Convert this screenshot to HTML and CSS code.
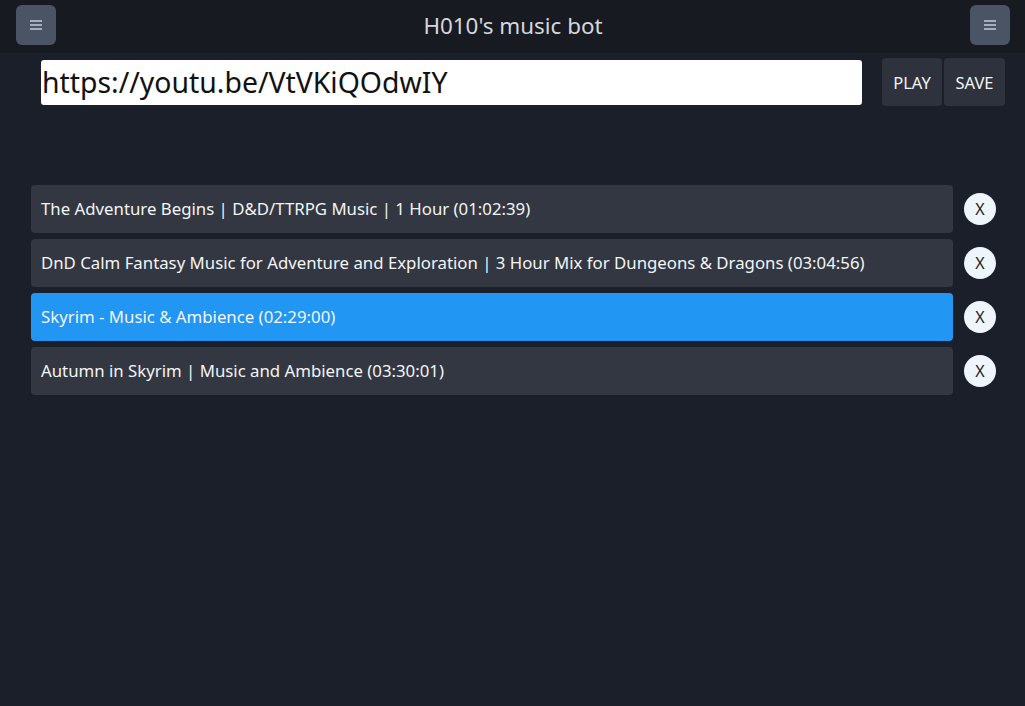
FILE: index.html
```html
<!DOCTYPE html>
<html>
<head>
<meta charset="utf-8">
<link rel="stylesheet" href="styles.css">
</head>
<body>
<header class="topbar">
  <button class="menu-btn" aria-label="menu">
    <svg width="14" height="12" viewBox="0 0 14 12"><path d="M1 2h12M1 6h12M1 10h12" stroke="#c7ccd4" stroke-width="1.4"/></svg>
  </button>
  <h1 class="title">H010's music bot</h1>
  <button class="menu-btn" aria-label="menu">
    <svg width="14" height="12" viewBox="0 0 14 12"><path d="M1 2h12M1 6h12M1 10h12" stroke="#c7ccd4" stroke-width="1.4"/></svg>
  </button>
</header>
<main class="content">
  <div class="url-row">
    <input class="url-input" type="text" value="https://youtu.be/VtVKiQOdwIY">
    <div class="actions">
      <button class="act-btn">PLAY</button>
      <button class="act-btn">SAVE</button>
    </div>
  </div>
  <ul class="queue">
    <li class="row"><div class="track">The Adventure Begins | D&amp;D/TTRPG Music | 1 Hour (01:02:39)</div><button class="remove">X</button></li>
    <li class="row"><div class="track">DnD Calm Fantasy Music for Adventure and Exploration | 3 Hour Mix for Dungeons &amp; Dragons (03:04:56)</div><button class="remove">X</button></li>
    <li class="row"><div class="track active">Skyrim - Music &amp; Ambience (02:29:00)</div><button class="remove">X</button></li>
    <li class="row"><div class="track">Autumn in Skyrim | Music and Ambience (03:30:01)</div><button class="remove">X</button></li>
  </ul>
</main>
</body>
</html>
```
FILE: styles.css
```css
* { box-sizing: border-box; }
html, body { margin: 0; height: 100%; }
body {
  background: #1b1f2a;
  font-family: "Noto Sans", "Open Sans", sans-serif;
  color: #f3f4f6;
}
.topbar {
  height: 53px;
  background: #181a22;
  display: flex;
  align-items: center;
  justify-content: space-between;
  padding: 0 15px 3px 16px;
}
.menu-btn {
  width: 40px;
  height: 40px;
  border: none;
  border-radius: 6px;
  background: #4b5465;
  display: flex;
  align-items: center;
  justify-content: center;
  padding: 0;
}
.title {
  margin: 0;
  font-size: 22.4px;
  font-weight: 400;
  color: #d4d7dd;
}
.content { padding: 5px 20px 0 31px; }
.url-row {
  display: flex;
  align-items: center;
  padding-left: 10px;
}
.url-input {
  width: 821px;
  height: 45px;
  border: none;
  border-radius: 3px;
  background: #fff;
  font-family: "Noto Sans", "Open Sans", sans-serif;
  font-size: 28.4px;
  color: #111;
  padding: 0 1px;
  outline: none;
}
.actions { display: flex; gap: 2px; margin-left: 20px; }
.act-btn {
  height: 48px;
  border: none;
  border-radius: 4px;
  background: #2e323c;
  color: #f3f4f6;
  font-family: "Noto Sans", "Open Sans", sans-serif;
  font-size: 16.5px;
  padding: 0 11px;
}
.act-btn:first-child { width: 60px; }
.act-btn:last-child { width: 61px; }
.queue {
  list-style: none;
  margin: 79px 0 0 0;
  padding: 0;
  display: flex;
  flex-direction: column;
  gap: 6px;
}
.row { display: flex; align-items: center; }
.track {
  width: 922px;
  height: 48px;
  background: #323741;
  border-radius: 4px;
  display: flex;
  align-items: center;
  padding-left: 10px;
  padding-bottom: 1px;
  font-size: 16.8px;
  color: #f3f4f6;
}
.track.active { background: #2196f3; }
.remove {
  width: 32px;
  height: 32px;
  margin-left: 11px;
  border: none;
  border-radius: 50%;
  background: #eef5fd;
  color: #222;
  font-family: "Noto Sans", "Open Sans", sans-serif;
  font-size: 16px;
  padding: 0;
}
```
